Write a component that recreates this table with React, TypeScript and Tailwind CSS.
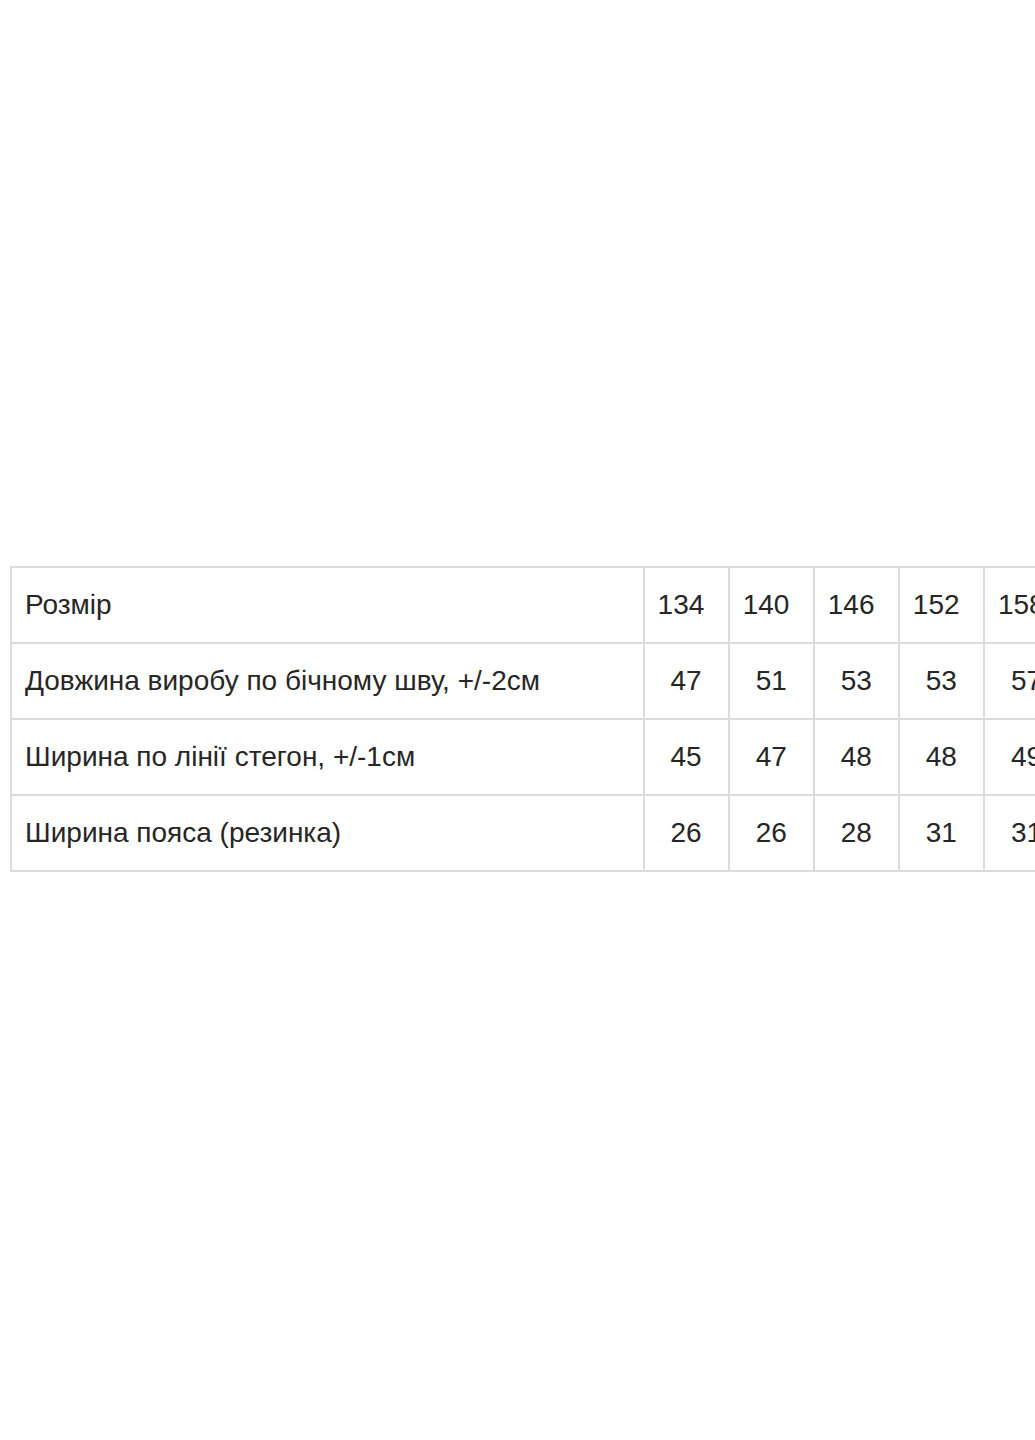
const header = ["134", "140", "146", "152", "158"];

const rows = [
  { label: "Довжина виробу по бічному шву, +/-2см", values: ["47", "51", "53", "53", "57"] },
  { label: "Ширина по лінії стегон, +/-1см", values: ["45", "47", "48", "48", "49"] },
  { label: "Ширина пояса (резинка)", values: ["26", "26", "28", "31", "31"] },
];

export default function App() {
  return (
    <div className="h-[1440px] w-[1035px] overflow-hidden bg-white pl-[10px] pt-[566px] font-['Liberation_Sans',Arial,sans-serif] text-[28px] text-[#262626]">
      <table className="w-[1060px] table-fixed border-collapse">
        <colgroup>
          <col className="w-[632px]" />
          {header.map((h) => (
            <col key={h} className="w-[85px]" />
          ))}
        </colgroup>
        <tbody>
          <tr className="h-[76px]">
            <td className="border-2 border-[#dcdcdc] pl-[13px]">Розмір</td>
            {header.map((h) => (
              <td key={h} className="border-2 border-[#dcdcdc] pl-[13px]">
                {h}
              </td>
            ))}
          </tr>
          {rows.map((r) => (
            <tr key={r.label} className="h-[76px]">
              <td className="whitespace-nowrap border-2 border-[#dcdcdc] pl-[13px]">{r.label}</td>
              {r.values.map((v, i) => (
                <td key={i} className="border-2 border-[#dcdcdc] text-center">
                  {v}
                </td>
              ))}
            </tr>
          ))}
        </tbody>
      </table>
    </div>
  );
}
